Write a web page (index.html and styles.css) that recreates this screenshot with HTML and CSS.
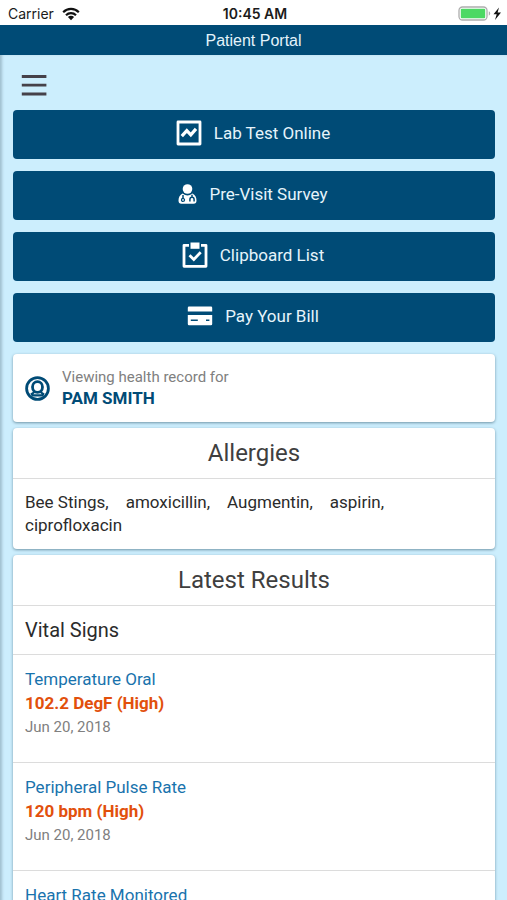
FILE: index.html
```html
<!DOCTYPE html>
<html lang="en">
<head>
<meta charset="utf-8">
<meta name="viewport" content="width=device-width, initial-scale=1">
<title>Patient Portal</title>
<link rel="stylesheet" href="styles.css">
</head>
<body>
<div class="status">
  <div class="status-left">
    <span>Carrier</span>
    <svg width="18" height="14" viewBox="0 0 18 14" aria-hidden="true"><g fill="none" stroke="#111" stroke-width="2.2"><path d="M1.2 5.2a11 11 0 0 1 15.6 0"/><path d="M4 8.2a7.1 7.1 0 0 1 10 0"/></g><path d="M9 13.2 5.9 10.1a4.4 4.4 0 0 1 6.2 0z" fill="#111"/></svg>
  </div>
  <div class="clock">10:45 AM</div>
  <div class="status-right">
    <svg width="44" height="16" viewBox="0 0 44 16" aria-hidden="true"><rect x="1" y="1" width="28" height="13" rx="3.5" fill="#fff" stroke="#adadad" stroke-width="1.3"/><rect x="2.8" y="2.8" width="24.4" height="9.4" rx="1" fill="#4cd964"/><path d="M30.8 5.3q1.4.6 1.4 2.2t-1.4 2.2z" fill="#adadad"/><path d="M41 1.5 35.5 8.300h3.200L37 14l6-7.500h-3.400z" fill="#111"/></svg>
  </div>
</div>
<header class="titlebar">Patient Portal</header>
<main class="page">
  <button class="menu" type="button" aria-label="Menu">
    <svg width="26" height="22" viewBox="0 0 26 22" aria-hidden="true"><path d="M.8 2.5h24.6M.8 11.200h24.600M.8 20h24.600" stroke="#454149" stroke-width="2.8"/></svg>
  </button>
  <nav class="actions" aria-label="Quick links">
    <button class="action" type="button">
      <svg width="26" height="26" viewBox="0 0 26 26" aria-hidden="true"><path d="M2 2h22v22H2z" fill="none" stroke="#fff" stroke-width="2.8" stroke-linejoin="round"/><path d="m5.800 16.200 5-5.500 4 4.200 5.200-6" fill="none" stroke="#fff" stroke-width="3.2"/></svg>
      <span>Lab Test Online</span>
    </button>
    <button class="action" type="button">
      <svg width="19" height="20" viewBox="0 0 19 20" aria-hidden="true"><circle cx="9.5" cy="5" r="4.8" fill="#fff"/><path d="M4.600 9.600Q9.500 13.400 14.400 9.600q4.100 1.900 4.100 7 0 3.200-3 3.200h-12q-3 0-3-3.200 0-5.100 4.100-7z" fill="#fff"/><path d="M5 11v3.500M14 10.800v2.200M11.900 17.600v-2.200q0-2.200 2.100-2.200t2.100 2.200v2.200" fill="none" stroke="#004b76" stroke-width="1.5"/><circle cx="5" cy="15.9" r="1.5" fill="#fff" stroke="#004b76" stroke-width="1.3"/></svg>
      <span>Pre-Visit Survey</span>
    </button>
    <button class="action" type="button">
      <svg width="26" height="26" viewBox="0 0 26 26" aria-hidden="true"><path d="M7 3.300H2v21h22v-21h-5" fill="none" stroke="#fff" stroke-width="2.8" stroke-linejoin="round"/><path d="M8.500.5h9v6.300h-9z" fill="#fff"/><path d="m7.500 13.200 4.300 4.300 6.900-7.300" fill="none" stroke="#fff" stroke-width="2.8"/></svg>
      <span>Clipboard List</span>
    </button>
    <button class="action" type="button">
      <svg width="26" height="20" viewBox="0 0 26 20" aria-hidden="true"><path d="M2 .5h22q1.200 0 1.200 1.200v3.800H.8V1.700Q.8.500 2 .5zM.8 9h24.400v9q0 1.200-1.200 1.200H2Q.8 19.200.8 18z" fill="#fff"/><path d="M3.800 14.200h7M19 14.200h3.400" stroke="#004b76" stroke-width="1.6"/></svg>
      <span>Pay Your Bill</span>
    </button>
  </nav>
  <section class="card person">
    <svg width="25" height="25" viewBox="0 0 25 25" aria-hidden="true"><g fill="none" stroke="#004b76"><circle cx="12.5" cy="12.5" r="10.9" stroke-width="2.8"/><ellipse cx="12.5" cy="11" rx="5" ry="5.300" stroke-width="2.800"/><path d="M9.300 15.200q-.2 1.800-3.500 3.200M15.700 15.200q.2 1.800 3.500 3.200M6.500 19.400h12" stroke-width="2.2"/></g></svg>
    <div>
      <div class="caption">Viewing health record for</div>
      <div class="name">PAM SMITH</div>
    </div>
  </section>
  <section class="card">
    <h2 class="card-title">Allergies</h2>
    <ul class="allergies">
      <li>Bee Stings,</li>
      <li>amoxicillin,</li>
      <li>Augmentin,</li>
      <li>aspirin,</li>
      <li>ciprofloxacin</li>
    </ul>
  </section>
  <section class="card">
    <h2 class="card-title">Latest Results</h2>
    <h3 class="group">Vital Signs</h3>
    <article class="result">
      <a href="#temperature">Temperature Oral</a>
      <strong>102.2 DegF (High)</strong>
      <time datetime="2018-06-20">Jun 20, 2018</time>
    </article>
    <article class="result">
      <a href="#pulse">Peripheral Pulse Rate</a>
      <strong>120 bpm (High)</strong>
      <time datetime="2018-06-20">Jun 20, 2018</time>
    </article>
    <article class="result">
      <a href="#heart">Heart Rate Monitored</a>
    </article>
  </section>
</main>
</body>
</html>
```
FILE: styles.css
```css
* { box-sizing: border-box; }
html { height: 100%; }
body {
  margin: 0;
  min-height: 100%;
  background: #cceefd;
  color: #2b2b2b;
  font-family: Roboto, "Liberation Sans", sans-serif;
  font-size: 17px;
  scrollbar-width: none;
}
html { scrollbar-width: none; }
svg { display: block; flex: none; }

.status {
  display: grid;
  grid-template-columns: 1fr auto 1fr;
  align-items: center;
  height: 25px;
  padding: 2px 5px 0 8px;
  background: #fff;
  color: #1b1b1b;
  font-family: Inter, sans-serif;
  font-size: 14px;
}
.status-left { display: flex; align-items: center; gap: 8px; }
.status-right { display: flex; justify-content: flex-end; }
.clock { font-weight: 600; }

.titlebar {
  height: 30px;
  background: #004b76;
  color: #e4f3fb;
  font-family: "Liberation Sans", sans-serif;
  font-size: 16px;
  line-height: 32px;
  text-align: center;
}

.page {
  padding: 19px 12px 0 13px;
  background: #cceefd;
  box-shadow: inset 3px 0 3px -1px #9fbfce;
}
.menu {
  display: block;
  margin: 0 0 14px 8px;
  padding: 0;
  border: 0;
  background: none;
}
.actions { display: grid; gap: 12px; margin-bottom: 12px; }
.action {
  display: flex;
  align-items: center;
  justify-content: center;
  gap: 12px;
  height: 49px;
  padding: 0 14px 3px 12px;
  border: 0;
  border-radius: 4px;
  background: #004b76;
  color: #e6f4fb;
  font: inherit;
}

.card {
  margin-bottom: 6px;
  border-radius: 4px;
  background: #fff;
  box-shadow: 0 1px 3px #6f94a6;
}
.person {
  display: flex;
  align-items: center;
  gap: 12px;
  height: 68px;
  padding: 0 12px;
}
.caption { color: #808080; font-size: 15px; line-height: 20px; }
.name { color: #004b76; font-weight: 700; line-height: 22px; }
.card-title {
  margin: 0;
  border-bottom: 1px solid #dcdcdc;
  color: #3f3f3f;
  font-size: 24px;
  font-weight: 400;
  line-height: 50px;
  text-align: center;
}
.allergies {
  display: flex;
  flex-wrap: wrap;
  column-gap: 17px;
  margin: 0;
  padding: 12px;
  line-height: 23px;
  list-style: none;
}
.group {
  margin: 0;
  padding: 0 12px;
  border-bottom: 1px solid #dcdcdc;
  font-size: 20px;
  font-weight: 400;
  line-height: 48px;
}
.result {
  display: flex;
  flex-direction: column;
  align-items: flex-start;
  min-height: 108px;
  padding: 12px;
  border-bottom: 1px solid #dcdcdc;
  line-height: 24px;
}
.result a { color: #1973ad; text-decoration: none; }
.result strong { color: #e2500c; font-weight: 700; }
.result time { color: #808080; font-size: 15px; }
```
